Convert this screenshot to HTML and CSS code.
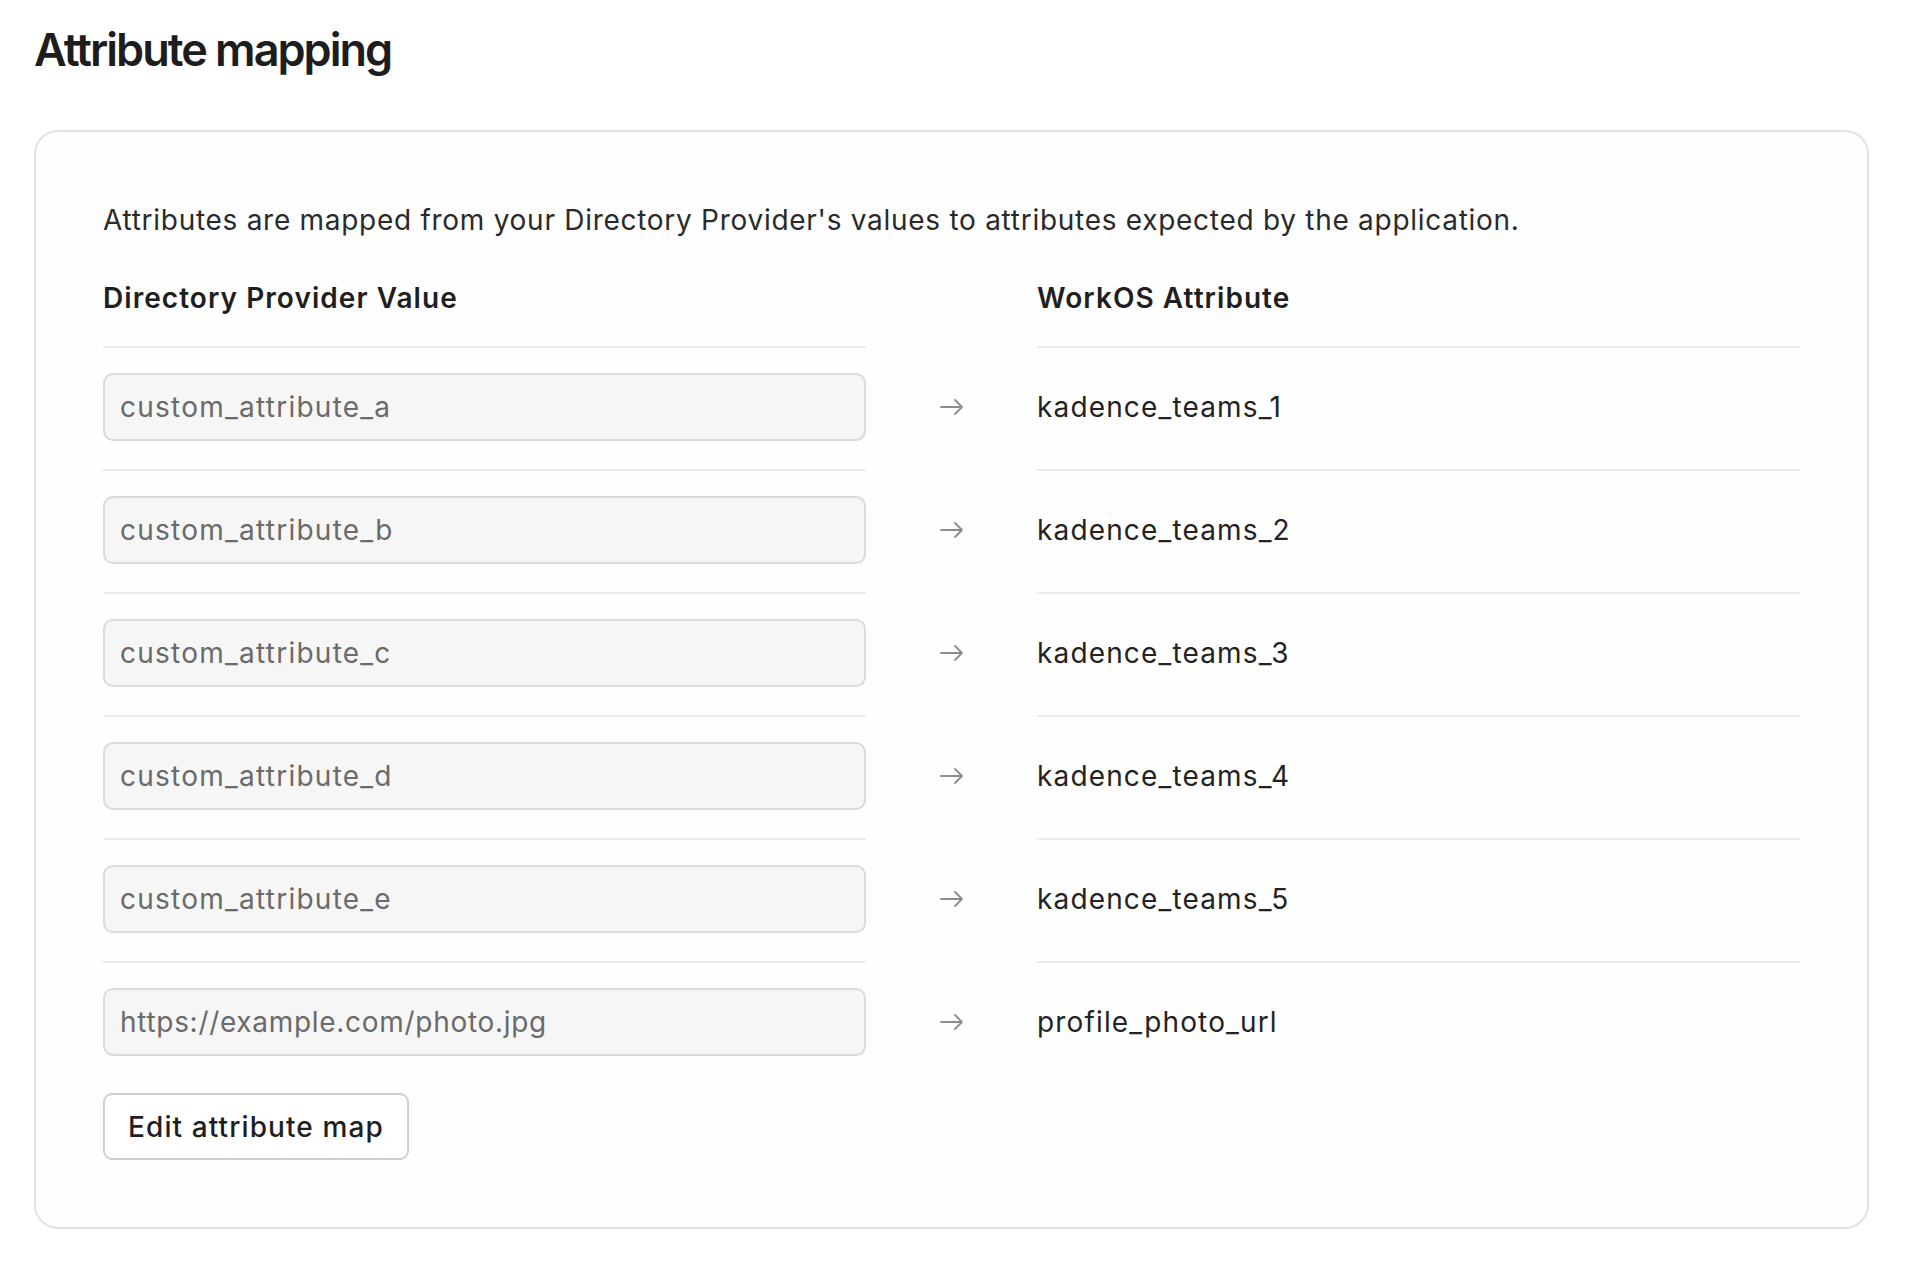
FILE: index.html
```html
<!DOCTYPE html>
<html lang="en">
<head>
<meta charset="utf-8">
<title>Attribute mapping</title>
<link rel="stylesheet" href="styles.css">
</head>
<body>
<div class="page">
  <h1 class="title">Attribute mapping</h1>
  <section class="card">
    <p class="desc">Attributes are mapped from your Directory Provider's values to attributes expected by the application.</p>
    <div class="row head">
      <div class="cell">Directory Provider Value</div>
      <div class="mid"></div>
      <div class="cell">WorkOS Attribute</div>
    </div>
    <div class="row">
      <div class="cell"><div class="field">custom_attribute_a</div></div>
      <div class="mid"><svg class="arrow" viewBox="0 0 24 24"><path d="M1 12H22M15 5L22 12L15 19"/></svg></div>
      <div class="cell value">kadence_teams_1</div>
    </div>
    <div class="row">
      <div class="cell"><div class="field">custom_attribute_b</div></div>
      <div class="mid"><svg class="arrow" viewBox="0 0 24 24"><path d="M1 12H22M15 5L22 12L15 19"/></svg></div>
      <div class="cell value">kadence_teams_2</div>
    </div>
    <div class="row">
      <div class="cell"><div class="field">custom_attribute_c</div></div>
      <div class="mid"><svg class="arrow" viewBox="0 0 24 24"><path d="M1 12H22M15 5L22 12L15 19"/></svg></div>
      <div class="cell value">kadence_teams_3</div>
    </div>
    <div class="row">
      <div class="cell"><div class="field">custom_attribute_d</div></div>
      <div class="mid"><svg class="arrow" viewBox="0 0 24 24"><path d="M1 12H22M15 5L22 12L15 19"/></svg></div>
      <div class="cell value">kadence_teams_4</div>
    </div>
    <div class="row">
      <div class="cell"><div class="field">custom_attribute_e</div></div>
      <div class="mid"><svg class="arrow" viewBox="0 0 24 24"><path d="M1 12H22M15 5L22 12L15 19"/></svg></div>
      <div class="cell value">kadence_teams_5</div>
    </div>
    <div class="row last">
      <div class="cell"><div class="field url">https://example.com/photo.jpg</div></div>
      <div class="mid"><svg class="arrow" viewBox="0 0 24 24"><path d="M1 12H22M15 5L22 12L15 19"/></svg></div>
      <div class="cell value">profile_photo_url</div>
    </div>
    <button class="btn" type="button">Edit attribute map</button>
  </section>
</div>
</body>
</html>
```

FILE: styles.css
```css
html, body {
  margin: 0;
  background: #ffffff;
}

body {
  font-family: Inter, "Noto Sans", sans-serif;
  color: #222222;
}

.page {
  padding: 22px 51px 40px 34px;
}

.title {
  margin: 0;
  font-size: 45px;
  line-height: 56px;
  font-weight: 600;
  color: #1d1d1d;
  letter-spacing: -2px;
}

.card {
  margin-top: 52px;
  border: 2px solid #e2e2e2;
  border-radius: 24px;
  padding: 68px 67px 67px 67px;
  background: #fefefe;
}

.desc {
  margin: 0 0 38px;
  font-size: 28px;
  line-height: 40px;
  color: #2a2a2a;
  letter-spacing: 0.72px;
}

.row {
  display: grid;
  grid-template-columns: 1fr 171px 1fr;
}

.row .cell {
  display: flex;
  align-items: center;
  padding: 25px 0 28px;
  border-top: 2px solid #ebebeb;
  font-size: 28px;
  line-height: 40px;
  letter-spacing: 1.15px;
}

.row .mid {
  display: flex;
  align-items: center;
  justify-content: center;
  padding: 27px 0 28px;
}

.row.head .cell {
  border-top: 0;
  padding: 0 0 28px;
  font-weight: 600;
  color: #1f1f1f;
  letter-spacing: 1.05px;
}

.row.head .mid {
  padding: 0;
}

.row.last .cell,
.row.last .mid {
  padding-bottom: 0;
}

.field {
  box-sizing: border-box;
  width: 100%;
  height: 68px;
  display: flex;
  align-items: center;
  padding: 0 15px;
  border: 2px solid #dadada;
  border-radius: 10px;
  background: #f6f6f6;
  color: #6a6a6a;
  font-size: 28px;
  letter-spacing: 1.25px;
}

.field.url {
  letter-spacing: 0.7px;
}

.value {
  color: #232323;
}

.arrow {
  width: 24px;
  height: 24px;
  fill: none;
  stroke: #8c8c8c;
  stroke-width: 1.8;
  stroke-linecap: round;
  stroke-linejoin: round;
}

.btn {
  margin-top: 37px;
  height: 67px;
  padding: 0 23px;
  border: 2px solid #cfcfcf;
  border-radius: 9px;
  background: #ffffff;
  font-family: Inter, "Noto Sans", sans-serif;
  font-size: 28px;
  font-weight: 500;
  color: #1f1f1f;
  letter-spacing: 1.1px;
  cursor: pointer;
}
```
